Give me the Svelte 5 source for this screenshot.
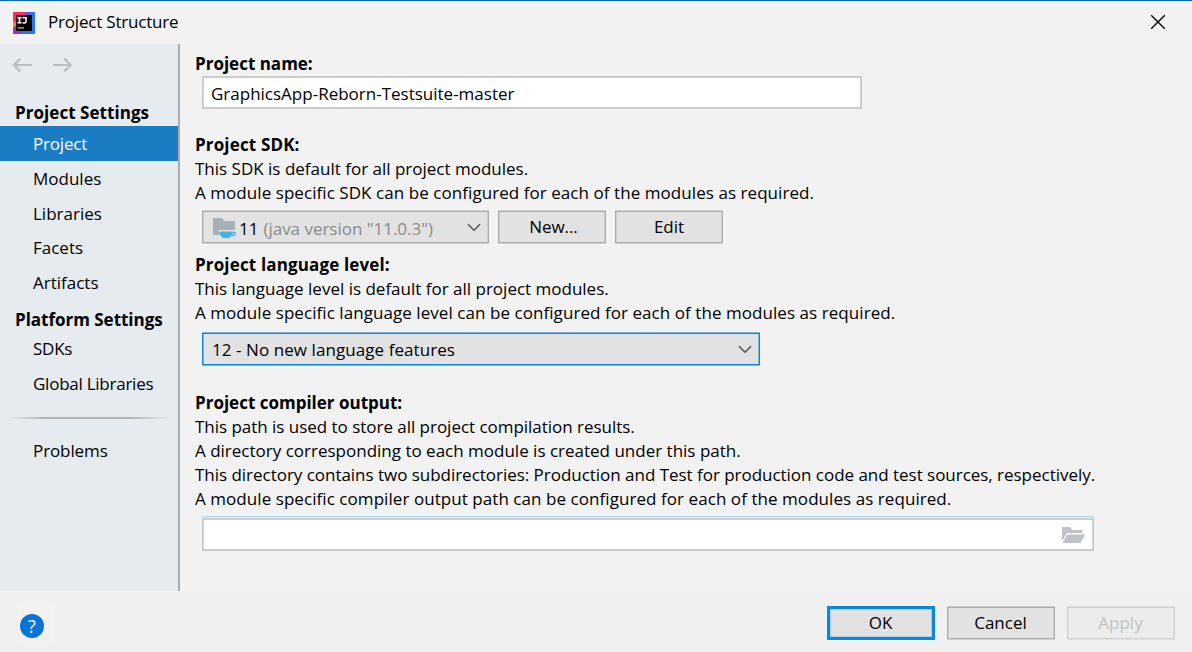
<script>
  const projectItems = ['Project', 'Modules', 'Libraries', 'Facets', 'Artifacts'];
  const platformItems = ['SDKs', 'Global Libraries'];
</script>

<div class="dialog">
  <header>
    <svg class="logo" width="22" height="22" viewBox="0 0 22 22">
      <defs>
        <linearGradient id="face" x1="0" y1="0" x2="1" y2="1"><stop offset="0" stop-color="#333" /><stop offset=".5" stop-color="#000" /></linearGradient>
      </defs>
      <path fill="#2d72f0" d="M0 0h22v22H0z" />
      <path fill="#fd2e5e" d="M0 0h13l2 3-8 8-7-1z" />
      <path fill="#f98433" d="M0 9l5 3-2 6-3-2z" />
      <path fill="#9138cf" d="M0 16l5-4 5 10H0z" />
      <path fill="#6057db" d="M12 0h5v4h-4z" />
      <path fill="url(#face)" d="M3 3h16v16H3z" />
      <path fill="none" stroke="#fff" stroke-width="1.5" d="M4.500 5.700h4M6.500 5.700v5M4.500 10.800h4M9.600 5.700h3.500v3.700q0 1.500-1.500 1.500H9.600" />
      <path fill="#aaa" d="M5 15.200h6v1.400H5z" />
    </svg>
    <h1>Project Structure</h1>
    <svg class="close" width="16" height="16" viewBox="0 0 16 16"><path d="M1.200 1.200l13.600 13.600M14.800 1.200L1.200 14.800" stroke="#111" stroke-width="1.500" /></svg>
  </header>

  <div class="body">
    <aside>
      <div class="nav">
        <svg width="20" height="16" viewBox="0 0 20 16"><path d="M20 8H2M8.200 1.600L1.800 8l6.400 6.400" /></svg>
        <svg width="20" height="16" viewBox="0 0 20 16"><path d="M1 8h17M12.300 1.600L18.700 8l-6.400 6.400" /></svg>
      </div>
      <h2>Project Settings</h2>
      <ul>
        {#each projectItems as item, i}
          <li class:selected={i === 0}>{item}</li>
        {/each}
      </ul>
      <h2 class="platform">Platform Settings</h2>
      <ul>
        {#each platformItems as item}
          <li>{item}</li>
        {/each}
      </ul>
      <div class="separator"></div>
      <ul><li>Problems</li></ul>
    </aside>

    <main>
      <section class="name">
        <h3>Project name:</h3>
        <div class="field">GraphicsApp-Reborn-Testsuite-master</div>
      </section>
      <section class="sdk">
        <h3 class="wide">Project SDK:</h3>
        <p>This SDK is default for all project modules.</p>
        <p class="loose">A module specific SDK can be configured for each of the modules as required.</p>
        <div class="row">
          <div class="combo sdk-combo">
            <svg class="jdk" width="24" height="22" viewBox="0 0 24 22">
              <path fill="#a7b0b7" d="M0 1h8.500l3 3H22v14H0z" />
              <path fill="#e2e2e2" d="M5.500 13H24V22H8z" />
              <path fill="#40b6e0" d="M6.500 14.500h13.200c-.2 3.300-2 5.500-3.800 6.500h-5.600c-2.200-1-3.800-3.200-3.800-6.500z" />
              <path fill="none" stroke="#40b6e0" stroke-width="1.500" d="M18.500 15.500h3.200q1 1-.2 2.200-1.500 1-4 .9" />
            </svg>
            <span class="version">11</span><span class="muted">(java version "11.0.3")</span>
            <svg class="chevron" width="14" height="9" viewBox="0 0 14 9"><path d="M1 1.200l6 6 6-6" /></svg>
          </div>
          <button class="new">New...</button>
          <button>Edit</button>
        </div>
      </section>
      <section class="level">
        <h3 class="wide">Project language level:</h3>
        <p>This language level is default for all project modules.</p>
        <p class="loose">A module specific language level can be configured for each of the modules as required.</p>
        <div class="combo level-combo">
          <span>12 - No new language features</span>
          <svg class="chevron" width="14" height="9" viewBox="0 0 14 9"><path d="M1 1.200l6 6 6-6" /></svg>
        </div>
      </section>
      <section class="output">
        <h3>Project compiler output:</h3>
        <p class="tight">This path is used to store all project compilation results.</p>
        <p>A directory corresponding to each module is created under this path.</p>
        <p class="tight">This directory contains two subdirectories: Production and Test for production code and test sources, respectively.</p>
        <p class="loose">A module specific compiler output path can be configured for each of the modules as required.</p>
        <div class="accent"></div>
        <div class="field path">
          <svg width="23" height="18" viewBox="0 0 23 18"><path fill="#bcc2c7" d="M0 1h8l2.500 3H20v3H5L0 15zM5.300 8.500H23L18.500 17H.5z" /></svg>
        </div>
      </section>
    </main>
  </div>

  <footer>
    <div class="help-box"><div class="help">?</div></div>
    <button class="primary">OK</button>
    <button>Cancel</button>
    <button class="disabled" disabled>Apply</button>
  </footer>
</div>

<style>
  :global(body) { margin: 0; }
  * { box-sizing: border-box; }
  .dialog {
    width: 1192px; height: 652px; display: flex; flex-direction: column;
    background: #f2f2f2; border-top: 1px solid #0068bd; overflow: hidden;
    font: 17px/24px "Open Sans", sans-serif; color: #000; white-space: nowrap;
  }
  h1, h2, h3, p, ul { margin: 0; padding: 0; font-size: inherit; }
  header { height: 43px; display: flex; align-items: center; padding: 0 26px 1px 13px; flex: none; }
  .logo { margin-top: 1px; }
  h1 { font-weight: 400; margin-left: 13px; letter-spacing: -.2px; }
  .close { margin-left: auto; }
  .body { display: flex; height: 547px; flex: none; }
  aside { width: 180px; background: #e6ebef; border-right: 2px solid #ababab; padding-top: 13px; }
  .nav { display: flex; gap: 20px; padding-left: 12px; height: 43px; }
  .nav path { fill: none; stroke: #bdbdbd; stroke-width: 2.200; }
  h2 { font-weight: 700; padding-left: 15px; height: 26px; line-height: 26px; letter-spacing: .05px; }
  li { list-style: none; height: 34.500px; line-height: 36px; padding-left: 33px; }
  .selected { background: #1a7dc4; color: #fff; height: 35px; letter-spacing: -.2px; }
  .platform { height: 31px; line-height: 41px; letter-spacing: -.02px; }
  .platform + ul { letter-spacing: -.25px; }
  .platform + ul li { line-height: 37px; }
  .separator { height: 2px; margin: 18px 8px 15px; background: linear-gradient(90deg, transparent, #b3b3b3 22%, #b3b3b3 75%, transparent); }
  .separator + ul { letter-spacing: -.1px; margin-top: -2px; }
  .separator + ul li { line-height: 37px; }
  main { flex: 1; padding: 8px 0 0 15px; }
  h3 { font-weight: 700; }
  .wide { letter-spacing: .15px; }
  .loose { letter-spacing: .06px; }
  .tight { letter-spacing: -.028px; }
  .field {
    margin-left: 7px; height: 33px; line-height: 31px; padding-left: 8px;
    background: #fff; border: 1px solid #c9c9c9; box-shadow: inset 0 0 0 1px #cfcfcf;
  }
  .name .field { width: 660px; line-height: 33px; margin-bottom: 24px; }
  .row { display: flex; gap: 9px; margin: 6px 0 0 7px; }
  .combo, button {
    --edge: #adadad; --soft: #cdcdcd;
    height: 32px; background: #e2e2e2; border: 1px solid var(--edge);
    box-shadow: 0 -1px var(--soft), 0 1px var(--soft), inset 1px 0 var(--soft), inset -1px 0 var(--soft);
  }
  .combo { display: flex; align-items: center; padding: 0 7px 0 10px; }
  .sdk-combo { width: 287px; }
  .jdk { margin-top: 2px; }
  .muted { color: #8a8a8a; margin: 3px 0 0 5px; letter-spacing: -.02px; }
  .version { margin: 3px 0 0 2px; }
  .chevron { margin-left: auto; }
  .chevron path { fill: none; stroke: #555; stroke-width: 1.600; }
  button { width: 108px; padding: 0; font: inherit; color: #000; border-radius: 0; }
  .new { padding-left: 3px; letter-spacing: -.1px; }
  .level { margin-top: 10px; }
  .level-combo { --edge: #0c84df; --soft: #77b8eb; width: 558px; margin: 8px 0 0 7px; padding-left: 9px; letter-spacing: .07px; }
  .level-combo span { margin-top: 2px; }
  .output { margin-top: 26px; }
  .accent { width: 893px; height: 1px; margin: 5px 0 1px 6px; background: #add3ee; }
  .path { width: 892px; display: flex; align-items: center; justify-content: flex-end; padding-right: 8px; }
  footer { flex: 1; display: flex; align-items: center; background: #f0f0f0; padding: 3px 17px 0 18px; gap: 12px; }
  .help-box { width: 36px; height: 36px; margin: 3px auto 0 0; background: #f2f2f2; padding: 7px 0 0 2px; }
  .help { width: 24px; height: 24px; border-radius: 50%; background: #0873d9; color: #fff; text-align: center; font-size: 18px; }
  footer button { position: relative; left: -.5px; }
  .primary { height: 34px; border: 3px solid #0c86e0; box-shadow: inset 0 0 0 .500px #77b8eb; }
  .disabled { --edge: #d0d0d0; --soft: #e0e0e0; color: #c1c1c1; background: #ececec; }
</style>
